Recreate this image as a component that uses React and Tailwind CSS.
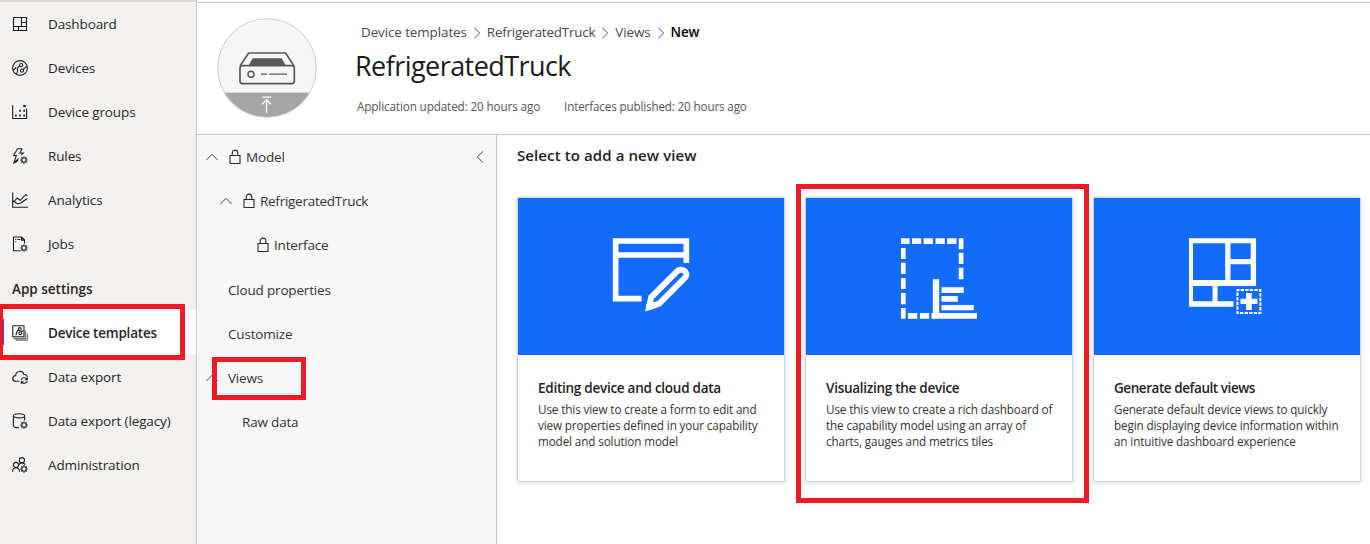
const GEAR = (
  <g>
    <circle cx="12" cy="12" r="2.2" />
    <path d="M12 8.3v1.3M12 14.4v1.3M8.3 12h1.3M14.4 12h1.3M9.4 9.4l.9.9M13.7 13.7l.9.9M9.4 14.6l.9-.9M13.7 10.3l.9-.9" />
  </g>
);

const ICONS = {
  dashboard: <path d="M1.5 1.5h13v13h-13zM9.5 1.5v9M9.5 6.5h5M1.5 10.5h13M6.5 10.5v4" />,
  devices: (
    <g>
      <circle cx="8" cy="8" r="7.4" />
      <circle cx="9.2" cy="5.1" r="1.6" />
      <circle cx="10" cy="10.6" r="1.6" />
      <path d="M7.8 6.1C5.4 7.2 5 8.6 5.4 10.2 5.8 11.8 5 13.2 4.2 14M1 9.6c2 .2 2.200-1.200 2.900-2.300M11.200 9.500l2.400-2.300 1.400-.6" />
    </g>
  ),
  groups: (
    <g>
      <path d="M.7 1.200v13.300h13.900V4.500" />
      <path d="M3 11.500h1.700M7.200 11.500h1.700M11.300 11.500h1.700M7.200 6.700h1.700M11.300 6.700h1.700M11.300 2h2.500" strokeWidth="2" />
    </g>
  ),
  rules: (
    <g>
      <path d="M10.200 .8H5.400L1.700 7.500h2.600L2 14.600l4.800-4.200M10.200 .8 7.800 5h3.600L9.300 7.200M2 14.600l1.600-.2 2.600-2.300" />
      {GEAR}
    </g>
  ),
  analytics: <path d="M.7.500v14.800H16M1.500 10.200 5.300 6l2.900 2.300 5.600-5.600 1.700 1M1.500 9l4.200 3 2.700-.7 6.900-4.800" />,
  jobs: (
    <g>
      <path d="M8.500 14.800H1.500V1h8.200l2.800 2.800v3.700M9.500 1.200v2.900h3M3.200 3.500h1M5.200 3.500h3M3.200 5.700h1" />
      {GEAR}
    </g>
  ),
  templates: (
    <g>
      <path d="M.8.800h11.200v11H.8z" />
      <circle cx="7.800" cy="4" r="1.400" />
      <circle cx="8.200" cy="8.200" r="1.400" />
      <path d="M6.600 4.700C3.800 6.200 5.400 8 3.600 10.200M9.300 7.200l1.900-1.900" />
      <path d="M2.300 12.300v1.200h11.200V5.500M4.300 14v1.200h11.200V8.500" stroke="#777" strokeWidth="1.300" />
    </g>
  ),
  cloud: (
    <g>
      <path d="M7.500 12.200H3.500C-.2 12-.2 6.800 3.600 6.600 4 1.600 10.600 1 11.700 5.300c2.300-.1 3.700 1.200 3.600 3" />
      <path d="M9.200 11.200c.4-3 4.600-3.200 5.800-.8M15.300 8.400v2.300h-2.400M15.300 12c-.6 2.800-4.400 3.100-5.700.9M9.200 15v-2.300h2.400" />
    </g>
  ),
  legacy: (
    <g>
      <ellipse cx="7" cy="2.800" rx="5.600" ry="2.100" />
      <path d="M1.400 2.800v10c0 1.200 2.200 2 5.600 2M12.600 2.800v4.400" />
      {GEAR}
    </g>
  ),
  admin: (
    <g>
      <circle cx="9.900" cy="3.200" r="2.600" />
      <circle cx="4" cy="8" r="2.600" />
      <path d="M.5 14.800c.2-5.400 6.800-5.400 7 0M6.800 7.600c1.600-2.400 5-2.300 6.400 0" />
      {GEAR}
    </g>
  ),
};

function NavIcon({ name }) {
  return (
    <svg className="h-4 w-4 shrink-0" viewBox="0 0 16 16" fill="none" stroke="#1f1f1f" strokeWidth="1.1">
      {ICONS[name]}
    </svg>
  );
}

function NavItem({ icon, label, active }) {
  return (
    <li
      className={
        active
          ? "relative flex h-11 items-center gap-5 pl-3 font-semibold tracking-[-0.220px]"
          : "flex h-11 items-center gap-5 pl-3 tracking-[-0.120px]"
      }
    >
      {active && <span className="absolute inset-x-0 -top-px h-11 bg-white" />}
      <span className="relative flex items-center gap-5">
        <NavIcon name={icon} />
        <span>{label}</span>
      </span>
      {active && <span className="absolute top-[8px] left-[3px] h-[26px] w-px bg-[#2b4fd8]" />}
      {active && <span className="absolute -top-[7px] -left-[2px] h-[56px] w-[187px] border-[5px] border-[#ed1c24]" />}
    </li>
  );
}

function Sidebar() {
  return (
    <nav className="w-[197px] shrink-0 border-t-2 border-r border-t-[#d9d8d7] border-r-[#c9c9c9] bg-[#f3f2f1] text-[#262626]">
      <ul>
        <NavItem icon="dashboard" label="Dashboard" />
        <NavItem icon="devices" label="Devices" />
        <NavItem icon="groups" label="Device groups" />
        <NavItem icon="rules" label="Rules" />
        <NavItem icon="analytics" label="Analytics" />
        <NavItem icon="jobs" label="Jobs" />
        <li className="flex h-[45px] items-center pt-[2px] pl-3 text-[13.5px] font-semibold">App settings</li>
        <NavItem icon="templates" label="Device templates" active />
        <NavItem icon="cloud" label="Data export" />
        <NavItem icon="legacy" label="Data export (legacy)" />
        <NavItem icon="admin" label="Administration" />
      </ul>
    </nav>
  );
}

function Avatar() {
  return (
    <svg className="h-[100px] w-[100px] shrink-0" viewBox="51 55 300 300" fill="none">
      <clipPath id="disc">
        <circle cx="201" cy="205" r="148" />
      </clipPath>
      <circle cx="201" cy="205" r="148" fill="#f6f6f6" />
      <rect x="51" y="279" width="300" height="80" fill="#a5a5a5" clipPath="url(#disc)" />
      <circle cx="201" cy="205" r="148" stroke="#cdcdcd" strokeWidth="3" />
      <path d="M120 199 146 160H257L282 199" stroke="#595959" strokeWidth="5" />
      <path d="M158 176H245L257 197H146Z" fill="#595959" />
      <rect x="120" y="198" width="163" height="54" rx="8" stroke="#595959" strokeWidth="5" />
      <circle cx="153" cy="224" r="9" stroke="#595959" strokeWidth="4.500" />
      <path d="M183 223.500H201M208 223.500H261" stroke="#595959" strokeWidth="4" />
      <path d="M186 292.500H214M199.500 339V300M186 314 199.500 300 213 314" stroke="#fff" strokeWidth="4" />
    </svg>
  );
}

function Separator() {
  return (
    <svg className="mx-[6px] mt-px h-3 w-2 shrink-0" viewBox="0 0 8 12" fill="none" stroke="#555">
      <path d="M1.200.7 6.700 6 1.200 11.300" />
    </svg>
  );
}

function Header() {
  return (
    <header className="flex h-[133px] shrink-0 border-t border-b border-[#c9c9c9] bg-white pt-[15px] pl-5">
      <Avatar />
      <div className="pl-[39px]">
        <div className="mt-[4px] flex h-5 items-center pl-[5px] text-[13.400px] tracking-[-0.080px] whitespace-nowrap text-[#484848]">
          <span>Device templates</span>
          <Separator />
          <span className="tracking-[-0.200px]">RefrigeratedTruck</span>
          <Separator />
          <span>Views</span>
          <Separator />
          <span className="font-semibold text-black">New</span>
        </div>
        <h1 className="mt-[6px] -ml-[1px] text-[27px] leading-9 tracking-[-0.560px] text-[#1b1b1b]">RefrigeratedTruck</h1>
        <div className="mt-[14px] flex gap-[24px] pl-px text-[11.700px] leading-4 tracking-[-0.120px] whitespace-nowrap text-[#555]">
          <span>Application updated: 20 hours ago</span>
          <span className="tracking-[-0.160px]">Interfaces published: 20 hours ago</span>
        </div>
      </div>
    </header>
  );
}

function ChevronUp() {
  return (
    <svg className="mr-[11px] h-3 w-3 shrink-0" viewBox="0 0 12 12" fill="none" stroke="#444">
      <path d="M.4 9 6 3.300 11.600 9" />
    </svg>
  );
}

function Lock() {
  return (
    <svg className="mr-[5px] h-4 w-3 shrink-0" viewBox="0 0 12 16" fill="none" stroke="#2b2b2b" strokeWidth="1.100">
      <path d="M1 6.500H11V14.500H1zM3.200 6.500V4C3.200.2 8.800.2 8.800 4V6.500" />
    </svg>
  );
}

const ROW = "flex h-11 items-center";

function TemplateTree() {
  return (
    <aside className="w-[300px] shrink-0 border-r border-[#c9c9c9] bg-[#f7f7f7] tracking-[-0.180px] text-[#333]">
      <div className={`${ROW} pl-[9px]`}>
        <ChevronUp />
        <Lock />
        <span>Model</span>
        <svg className="mr-[12px] ml-auto h-3 w-2" viewBox="0 0 8 12" fill="none" stroke="#444">
          <path d="M7 .5 1.200 6 7 11.500" />
        </svg>
      </div>
      <div className={`${ROW} pl-[23px]`}>
        <ChevronUp />
        <Lock />
        <span className="tracking-[-0.270px]">RefrigeratedTruck</span>
      </div>
      <div className={`${ROW} pl-[60px]`}>
        <Lock />
        <span>Interface</span>
      </div>
      <div className={`${ROW} mt-px pl-[31px]`}>Cloud properties</div>
      <div className={`${ROW} pl-[31px]`}>Customize</div>
      <div className={`${ROW} relative pl-[9px]`}>
        <ChevronUp />
        <span className="-ml-px">Views</span>
        <span className="absolute top-px left-[15px] h-[43px] w-[94px] border-[5px] border-[#ed1c24]" />
      </div>
      <div className={`${ROW} pl-[45px]`}>Raw data</div>
    </aside>
  );
}

const EDIT_ART = (
  <g stroke="#fff" strokeWidth="17">
    <path d="M426 356H348V183H561V249M348 225H561" />
    <path d="M449 381 455 352 532 275C546 260 570 277 558 292L479 371Z" strokeWidth="18" />
    <path d="M438 392 443 362 466 386Z" fill="#fff" stroke="none" />
  </g>
);

const CHART_ART = (
  <g fill="#fff">
    <path d="M334 175h26v17h-26zM367 175h28v17h-28zM402 175h28v17h-28zM438 175h28v17h-28zM473 175h28v17h-28zM508 175h14v33h-14zM508 218h14v34h-14zM508 263h14v35h-14z" />
    <path d="M334 204h14v33h-14zM334 248h14v34h-14zM334 294h14v33h-14zM334 339h14v34h-14zM334 384h14v32h-14zM355 399h28v17h-28zM391 399h28v17h-28z" />
    <path d="M430 298h19v101h114v17H426v-17h4zM456 322h67v17h-67zM456 348h49v17h-49zM456 375h97v16h-97z" />
  </g>
);

const GRID_ART = (
  <g>
    <path d="M328 175H530V318H414V364H462V380H328ZM340 190V300H437V190ZM453 190V237H514V190ZM453 253V300H514V253ZM340 318V364H399V318Z" fill="#fff" fillRule="evenodd" />
    <path d="M474 330H543V399H474Z" stroke="#fff" strokeWidth="6" strokeDasharray="10 3.800" strokeDashoffset="4" />
    <path d="M500 339h17v17h17v16h-17v18h-17v-18h-17v-16h17z" fill="#fff" />
  </g>
);

function ViewCard({ art, viewBox, title, lines, titleClass, highlighted }) {
  return (
    <article className="relative flex h-[285px] w-[268px] flex-col rounded-[2px] border border-[#d6d6d6] bg-white shadow-[0_1px_4px_rgba(0,0,0,0.16)]">
      <div className="h-[157px] bg-[#136bfb]">
        <svg className="h-[157px] w-full" viewBox={viewBox} preserveAspectRatio="none" fill="none">
          {art}
        </svg>
      </div>
      <div className="px-5 pt-[23px]">
        <h3 className={`text-[13.500px] leading-5 font-semibold whitespace-nowrap text-[#222] ${titleClass}`}>{title}</h3>
        <p className="mt-[3px] text-[11.700px] leading-4 tracking-[-0.120px] whitespace-nowrap text-[#333]">
          {lines.map((line) => (
            <span key={line} className="block">
              {line}
            </span>
          ))}
        </p>
      </div>
      {highlighted && <span className="absolute -top-[14px] -left-[10px] h-[319px] w-[293px] border-[5px] border-[#ed1c24]" />}
    </article>
  );
}

export default function App() {
  return (
    <div className="flex h-[544px] w-[1370px] overflow-hidden bg-white font-['Open_Sans',sans-serif] text-[13.500px]">
      <Sidebar />
      <div className="flex min-w-0 flex-1 flex-col pt-[2px]">
        <Header />
        <div className="flex min-h-0 flex-1">
          <TemplateTree />
          <main className="flex-1 pt-[10px] pl-5">
            <h2 className="text-[15px] leading-5 font-semibold tracking-[0.100px] text-[#222]">Select to add a new view</h2>
            <div className="mt-[32px] flex gap-5">
              <ViewCard
                art={EDIT_ART}
                viewBox="54 54 801 471"
                title="Editing device and cloud data"
                titleClass="tracking-[-0.260px]"
                lines={["Use this view to create a form to edit and", "view properties defined in your capability", "model and solution model"]}
              />
              <ViewCard
                art={CHART_ART}
                viewBox="48 54 801 471"
                title="Visualizing the device"
                titleClass="tracking-[-0.270px]"
                lines={["Use this view to create a rich dashboard of", "the capability model using an array of", "charts, gauges and metrics tiles"]}
                highlighted
              />
              <ViewCard
                art={GRID_ART}
                viewBox="42 54 801 471"
                title="Generate default views"
                titleClass="tracking-[-0.440px]"
                lines={["Generate default device views to quickly", "begin displaying device information within", "an intuitive dashboard experience"]}
              />
            </div>
          </main>
        </div>
      </div>
    </div>
  );
}
